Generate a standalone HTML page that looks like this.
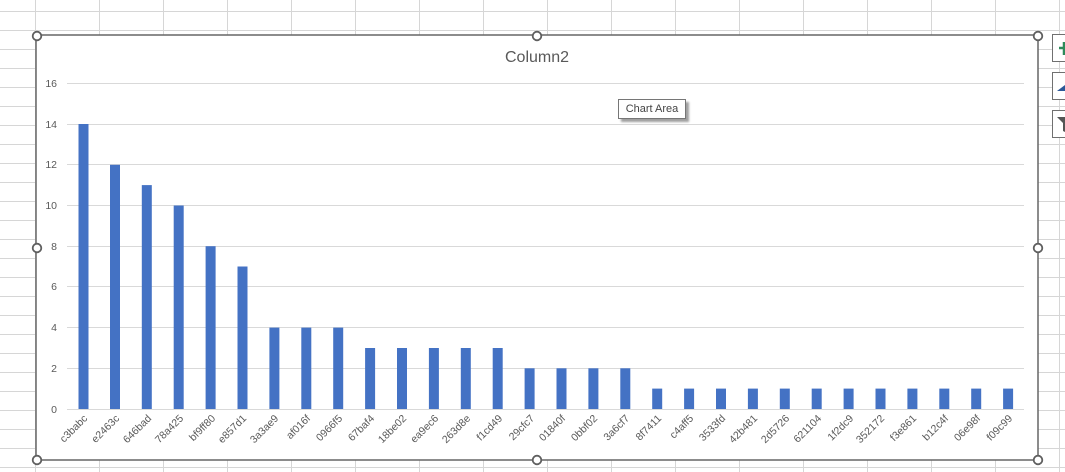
<!DOCTYPE html>
<html><head><style>
html,body{margin:0;padding:0;width:1065px;height:472px;overflow:hidden;background:#fff;}
.grid2{position:absolute;left:0;top:0;width:1065px;height:472px;
 background-image:repeating-linear-gradient(to bottom, #d6d6d6 0 1px, transparent 1px 19px),
 repeating-linear-gradient(to right, #d6d6d6 0 1px, transparent 1px 64px);
 background-position:0 11px, 35px 0;}
svg{position:absolute;left:0;top:0;}
text{font-family:"Liberation Sans",sans-serif;}
.btn{position:absolute;left:1052px;width:20px;height:26px;border:1px solid #707070;background:#fff;}
.tip{position:absolute;left:618px;top:99px;width:66px;height:18px;border:1px solid #767676;background:#fff;box-shadow:3px 3px 2px #a0a0a0;font:11px "Liberation Sans",sans-serif;color:#444;line-height:18px;text-align:center;}
</style></head><body>
<div class="grid2"></div>
<svg width="1065" height="472">
<rect x="36" y="35" width="1002" height="425" fill="#fff" stroke="#666" stroke-width="1.5"/>
<text x="537" y="62" font-size="16" fill="#595959" text-anchor="middle">Column2</text>
<g stroke="#d9d9d9" stroke-width="1">
<line x1="67" x2="1024" y1="83.5" y2="83.5"/>
<line x1="67" x2="1024" y1="124.5" y2="124.5"/>
<line x1="67" x2="1024" y1="164.5" y2="164.5"/>
<line x1="67" x2="1024" y1="205.5" y2="205.5"/>
<line x1="67" x2="1024" y1="246.5" y2="246.5"/>
<line x1="67" x2="1024" y1="286.5" y2="286.5"/>
<line x1="67" x2="1024" y1="327.5" y2="327.5"/>
<line x1="67" x2="1024" y1="368.5" y2="368.5"/>
<line x1="67" x2="1024" y1="409.5" y2="409.5"/>
</g>
<g font-size="10.5" fill="#595959" text-anchor="end">
<text x="57" y="87">16</text><text x="57" y="128">14</text><text x="57" y="168">12</text>
<text x="57" y="209">10</text><text x="57" y="250">8</text><text x="57" y="290">6</text>
<text x="57" y="331">4</text><text x="57" y="372">2</text><text x="57" y="413">0</text>
</g>
<g fill="#4472c4">
<rect x="78.5" y="124" width="10" height="285"/>
<rect x="110" y="164.8" width="10" height="244.2"/>
<rect x="141.8" y="185.1" width="10" height="223.9"/>
<rect x="173.7" y="205.5" width="10" height="203.5"/>
<rect x="205.6" y="246.2" width="10" height="162.8"/>
<rect x="237.5" y="266.5" width="10" height="142.5"/>
<rect x="269.4" y="327.6" width="10" height="81.4"/>
<rect x="301.3" y="327.6" width="10" height="81.4"/>
<rect x="333.2" y="327.6" width="10" height="81.4"/>
<rect x="365.1" y="348" width="10" height="61"/>
<rect x="397" y="348" width="10" height="61"/>
<rect x="428.9" y="348" width="10" height="61"/>
<rect x="460.8" y="348" width="10" height="61"/>
<rect x="492.7" y="348" width="10" height="61"/>
<rect x="524.6" y="368.3" width="10" height="40.7"/>
<rect x="556.5" y="368.3" width="10" height="40.7"/>
<rect x="588.4" y="368.3" width="10" height="40.7"/>
<rect x="620.3" y="368.3" width="10" height="40.7"/>
<rect x="652.2" y="388.6" width="10" height="20.4"/>
<rect x="684.1" y="388.6" width="10" height="20.4"/>
<rect x="716" y="388.6" width="10" height="20.4"/>
<rect x="747.9" y="388.6" width="10" height="20.4"/>
<rect x="779.8" y="388.6" width="10" height="20.4"/>
<rect x="811.7" y="388.6" width="10" height="20.4"/>
<rect x="843.6" y="388.6" width="10" height="20.4"/>
<rect x="875.5" y="388.6" width="10" height="20.4"/>
<rect x="907.4" y="388.6" width="10" height="20.4"/>
<rect x="939.3" y="388.6" width="10" height="20.4"/>
<rect x="971.2" y="388.6" width="10" height="20.4"/>
<rect x="1003.1" y="388.6" width="10" height="20.4"/>
</g>
<g font-size="10.5" fill="#595959" text-anchor="end">
<text transform="translate(88,419) rotate(-45)">c3babc</text>
<text transform="translate(120,419) rotate(-45)">e2463c</text>
<text transform="translate(152,419) rotate(-45)">646bad</text>
<text transform="translate(184,419) rotate(-45)">78a425</text>
<text transform="translate(216,419) rotate(-45)">bf9ff80</text>
<text transform="translate(247,419) rotate(-45)">e857d1</text>
<text transform="translate(279,419) rotate(-45)">3a3ae9</text>
<text transform="translate(311,419) rotate(-45)">af016f</text>
<text transform="translate(343,419) rotate(-45)">0966f5</text>
<text transform="translate(375,419) rotate(-45)">67baf4</text>
<text transform="translate(407,419) rotate(-45)">18be02</text>
<text transform="translate(439,419) rotate(-45)">ea9ec6</text>
<text transform="translate(471,419) rotate(-45)">263d8e</text>
<text transform="translate(503,419) rotate(-45)">f1cd49</text>
<text transform="translate(535,419) rotate(-45)">29cfc7</text>
<text transform="translate(566,419) rotate(-45)">01840f</text>
<text transform="translate(598,419) rotate(-45)">0bbf02</text>
<text transform="translate(630,419) rotate(-45)">3a6cf7</text>
<text transform="translate(662,419) rotate(-45)">8f7411</text>
<text transform="translate(694,419) rotate(-45)">c4aff5</text>
<text transform="translate(726,419) rotate(-45)">3533fd</text>
<text transform="translate(758,419) rotate(-45)">42b481</text>
<text transform="translate(790,419) rotate(-45)">2d5726</text>
<text transform="translate(822,419) rotate(-45)">621104</text>
<text transform="translate(854,419) rotate(-45)">1f2dc9</text>
<text transform="translate(885,419) rotate(-45)">352172</text>
<text transform="translate(917,419) rotate(-45)">f3e861</text>
<text transform="translate(949,419) rotate(-45)">b12c4f</text>
<text transform="translate(981,419) rotate(-45)">06e98f</text>
<text transform="translate(1013,419) rotate(-45)">f09c99</text>
</g>
<g fill="#fff" stroke="#5f5f5f" stroke-width="1.8">
<circle cx="37" cy="36" r="4.3"/><circle cx="537" cy="36" r="4.3"/><circle cx="1038" cy="36" r="4.3"/>
<circle cx="37" cy="248" r="4.3"/><circle cx="1038" cy="248" r="4.3"/>
<circle cx="37" cy="460" r="4.3"/><circle cx="537" cy="460" r="4.3"/><circle cx="1038" cy="460" r="4.3"/>
</g>
</svg>
<div class="btn" style="top:34px;"><svg width="20" height="26"><path d="M6 13h14M11 7v13" stroke="#2e8a5a" stroke-width="2.5"/></svg></div>
<div class="btn" style="top:72px;"><svg width="20" height="26"><path d="M4 18l8-6v6z" fill="#2b5797"/></svg></div>
<div class="btn" style="top:110px;"><svg width="20" height="26"><path d="M4 6h14l-6 6v9l-2-1v-8z" fill="#555"/></svg></div>
<div class="tip">Chart Area</div>
</body></html>
